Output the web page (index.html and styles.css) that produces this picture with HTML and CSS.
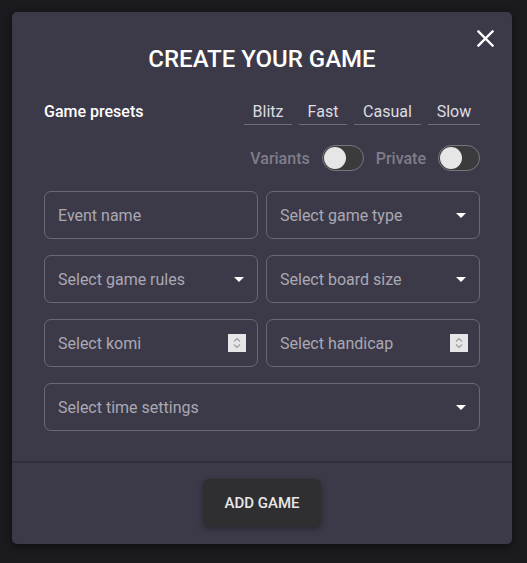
FILE: index.html
```html
<!DOCTYPE html>
<html>
<head>
<meta charset="utf-8">
<link rel="stylesheet" href="styles.css">
</head>
<body>
<div class="modal">
  <button class="close" aria-label="Close">
    <svg width="17" height="17" viewBox="0 0 17 17"><path d="M1.5 1.5 L15.5 15.5 M15.5 1.5 L1.5 15.5" stroke="#fff" stroke-width="2.4" stroke-linecap="square"/></svg>
  </button>
  <div class="content">
    <h1 class="title">CREATE YOUR GAME</h1>
    <div class="presets">
      <span class="presets-label">Game presets</span>
      <div class="preset-buttons">
        <span class="preset">Blitz</span>
        <span class="preset">Fast</span>
        <span class="preset">Casual</span>
        <span class="preset">Slow</span>
      </div>
    </div>
    <div class="toggles">
      <span class="toggle-label">Variants</span>
      <span class="switch"><span class="knob"></span></span>
      <span class="toggle-label">Private</span>
      <span class="switch"><span class="knob"></span></span>
    </div>
    <div class="fields">
      <div class="field"><span class="ph">Event name</span></div>
      <div class="field"><span class="ph">Select game type</span><span class="caret"></span></div>
      <div class="field"><span class="ph">Select game rules</span><span class="caret"></span></div>
      <div class="field"><span class="ph">Select board size</span><span class="caret"></span></div>
      <div class="field num"><span class="ph">Select komi</span>
        <span class="spin"><svg width="18" height="18" viewBox="0 0 18 18"><path d="M6 7.5 L9 4.5 L12 7.5 M6 10.5 L9 13.5 L12 10.5" fill="none" stroke="#9a9a9a" stroke-width="1.1"/></svg></span>
      </div>
      <div class="field num"><span class="ph">Select handicap</span>
        <span class="spin"><svg width="18" height="18" viewBox="0 0 18 18"><path d="M6 7.5 L9 4.5 L12 7.5 M6 10.5 L9 13.5 L12 10.5" fill="none" stroke="#9a9a9a" stroke-width="1.1"/></svg></span>
      </div>
      <div class="field wide"><span class="ph">Select time settings</span><span class="caret"></span></div>
    </div>
  </div>
  <div class="footer">
    <button class="add">ADD GAME</button>
  </div>
</div>
</body>
</html>
```
FILE: styles.css
```css
* { box-sizing: border-box; }
html, body { margin: 0; padding: 0; }
body {
  background: #1b1a1f;
  font-family: Roboto, "Liberation Sans", sans-serif;
  padding: 12px;
  height: 563px;
}
.modal {
  position: relative;
  width: 500px;
  background: #3c3a48;
  border-radius: 5px;
  box-shadow: 0 2px 8px rgba(0,0,0,0.5);
  color: #fff;
}
.close {
  position: absolute;
  top: 18px;
  right: 18px;
  width: 17px;
  height: 17px;
  padding: 0;
  border: 0;
  background: none;
  display: flex;
}
.content {
  padding: 33px 32px 30px;
}
.title {
  margin: 0;
  text-align: center;
  font-size: 24px;
  line-height: 28px;
  font-weight: 500;
  color: #fff;
}
.presets {
  margin-top: 27px;
  display: flex;
  justify-content: space-between;
  align-items: flex-start;
}
.presets-label {
  font-size: 16px;
  line-height: 24px;
  font-weight: 500;
  color: #fff;
}
.preset-buttons {
  display: flex;
  gap: 7px;
}
.preset {
  font-size: 16px;
  line-height: 24px;
  padding: 0 8px;
  color: #dddce2;
  border-bottom: 1px solid #6e6c7a;
  text-align: center;
}
.preset:nth-child(1) { width: 48px; }
.preset:nth-child(2) { width: 48px; }
.preset:nth-child(3) { width: 67px; }
.preset:nth-child(4) { width: 52px; }
.toggles {
  margin-top: 20px;
  display: flex;
  justify-content: flex-end;
  align-items: center;
  height: 26px;
}
.toggle-label {
  font-size: 16px;
  color: #7f7d8a;
  font-weight: 500;
  margin-right: 12px;
}
.switch {
  width: 42px;
  height: 26px;
  border-radius: 13px;
  background: #3b3b3d;
  border: 1px solid #77767e;
  display: flex;
  align-items: center;
  padding-left: 1px;
}
.switch + .toggle-label { margin-left: 12px; }
.knob {
  width: 22px;
  height: 22px;
  border-radius: 50%;
  background: #e6e6e6;
}
.fields {
  margin-top: 20px;
  display: grid;
  grid-template-columns: 1fr 1fr;
  gap: 16px 8px;
}
.field {
  height: 48px;
  border: 1px solid #6a6877;
  border-radius: 7px;
  display: flex;
  align-items: center;
  justify-content: space-between;
  padding: 0 13px 0 13px;
}
.field.wide { grid-column: 1 / 3; }
.ph {
  font-size: 16px;
  color: #aaa8b3;
}
.caret {
  width: 0;
  height: 0;
  border-left: 5px solid transparent;
  border-right: 5px solid transparent;
  border-top: 5px solid #fff;
}
.field.num { padding-right: 11px; }
.spin {
  width: 18px;
  height: 18px;
  background: #e6e6e8;
  display: flex;
}
.footer {
  border-top: 2px solid #302f3a;
  padding: 16px 0 17px;
  display: flex;
  justify-content: center;
}
.add {
  width: 118px;
  height: 48px;
  border: 0;
  border-radius: 6px;
  background: #2f2f31;
  color: #e8e8e8;
  font-family: Roboto, "Liberation Sans", sans-serif;
  font-size: 15px;
  font-weight: 500;
  box-shadow: 0 2px 6px rgba(0,0,0,0.35);
}
```
